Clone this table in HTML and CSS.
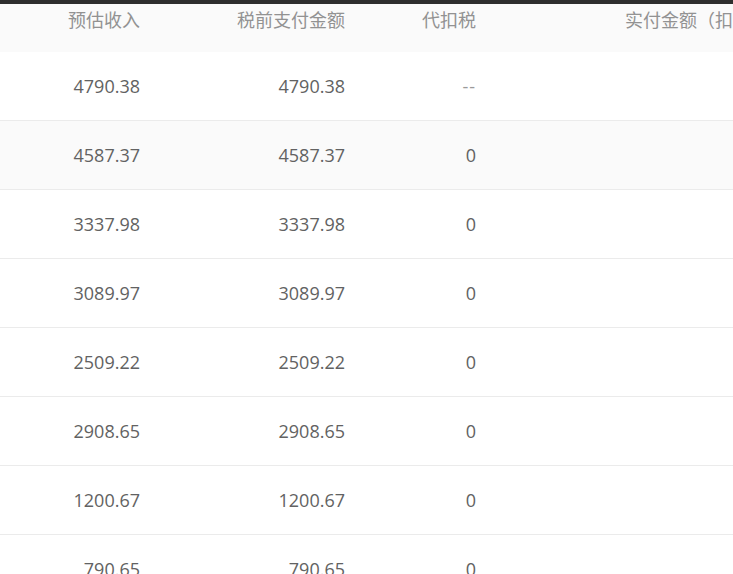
FILE: index.html
```html
<!DOCTYPE html>
<html lang="zh-CN">
<head>
<meta charset="utf-8">
<title>收入明细</title>
<link rel="stylesheet" href="styles.css">
</head>
<body>
<div class="topbar"></div>
<div class="table-wrap">
  <table class="income">
    <colgroup>
      <col class="c1"><col class="c2"><col class="c3"><col class="c4">
    </colgroup>
    <thead>
      <tr><th>预估收入</th><th>税前支付金额</th><th>代扣税</th><th>实付金额（扣税后）</th></tr>
    </thead>
    <tbody>
      <tr><td>4790.38</td><td>4790.38</td><td class="empty">--</td><td></td></tr>
      <tr class="hover"><td>4587.37</td><td>4587.37</td><td>0</td><td></td></tr>
      <tr><td>3337.98</td><td>3337.98</td><td>0</td><td></td></tr>
      <tr><td>3089.97</td><td>3089.97</td><td>0</td><td></td></tr>
      <tr><td>2509.22</td><td>2509.22</td><td>0</td><td></td></tr>
      <tr><td>2908.65</td><td>2908.65</td><td>0</td><td></td></tr>
      <tr><td>1200.67</td><td>1200.67</td><td>0</td><td></td></tr>
      <tr><td>790.65</td><td>790.65</td><td>0</td><td></td></tr>
    </tbody>
  </table>
</div>
</body>
</html>
```
FILE: styles.css
```css
html, body {
  margin: 0;
  padding: 0;
  background: #ffffff;
  overflow: hidden;
}
body {
  width: 733px;
  height: 574px;
  font-family: "Open Sans", "Noto Sans CJK SC", sans-serif;
}
.topbar {
  height: 4px;
  background: #2e2e2e;
}
.table-wrap {
  width: 733px;
  overflow: hidden;
}
.income {
  border-collapse: collapse;
  table-layout: fixed;
  width: 787px;
}
.c1 { width: 140px; }
.c2 { width: 205px; }
.c3 { width: 131px; }
.c4 { width: 311px; }
.income th {
  background: #fafafa;
  color: #929292;
  font-weight: normal;
  font-size: 18px;
  line-height: 26px;
  height: 48px;
  box-sizing: border-box;
  padding: 3px 0 19px;
  text-align: right;
  white-space: nowrap;
}
.income td {
  height: 68px;
  padding: 0;
  text-align: right;
  color: #626262;
  font-size: 18px;
  line-height: 26px;
  border-bottom: 1px solid #ebebeb;
  white-space: nowrap;
}
.income tr.hover td {
  background: #fafafa;
}
.income td.empty {
  color: #9a9a9a;
  letter-spacing: 1px;
}
```
